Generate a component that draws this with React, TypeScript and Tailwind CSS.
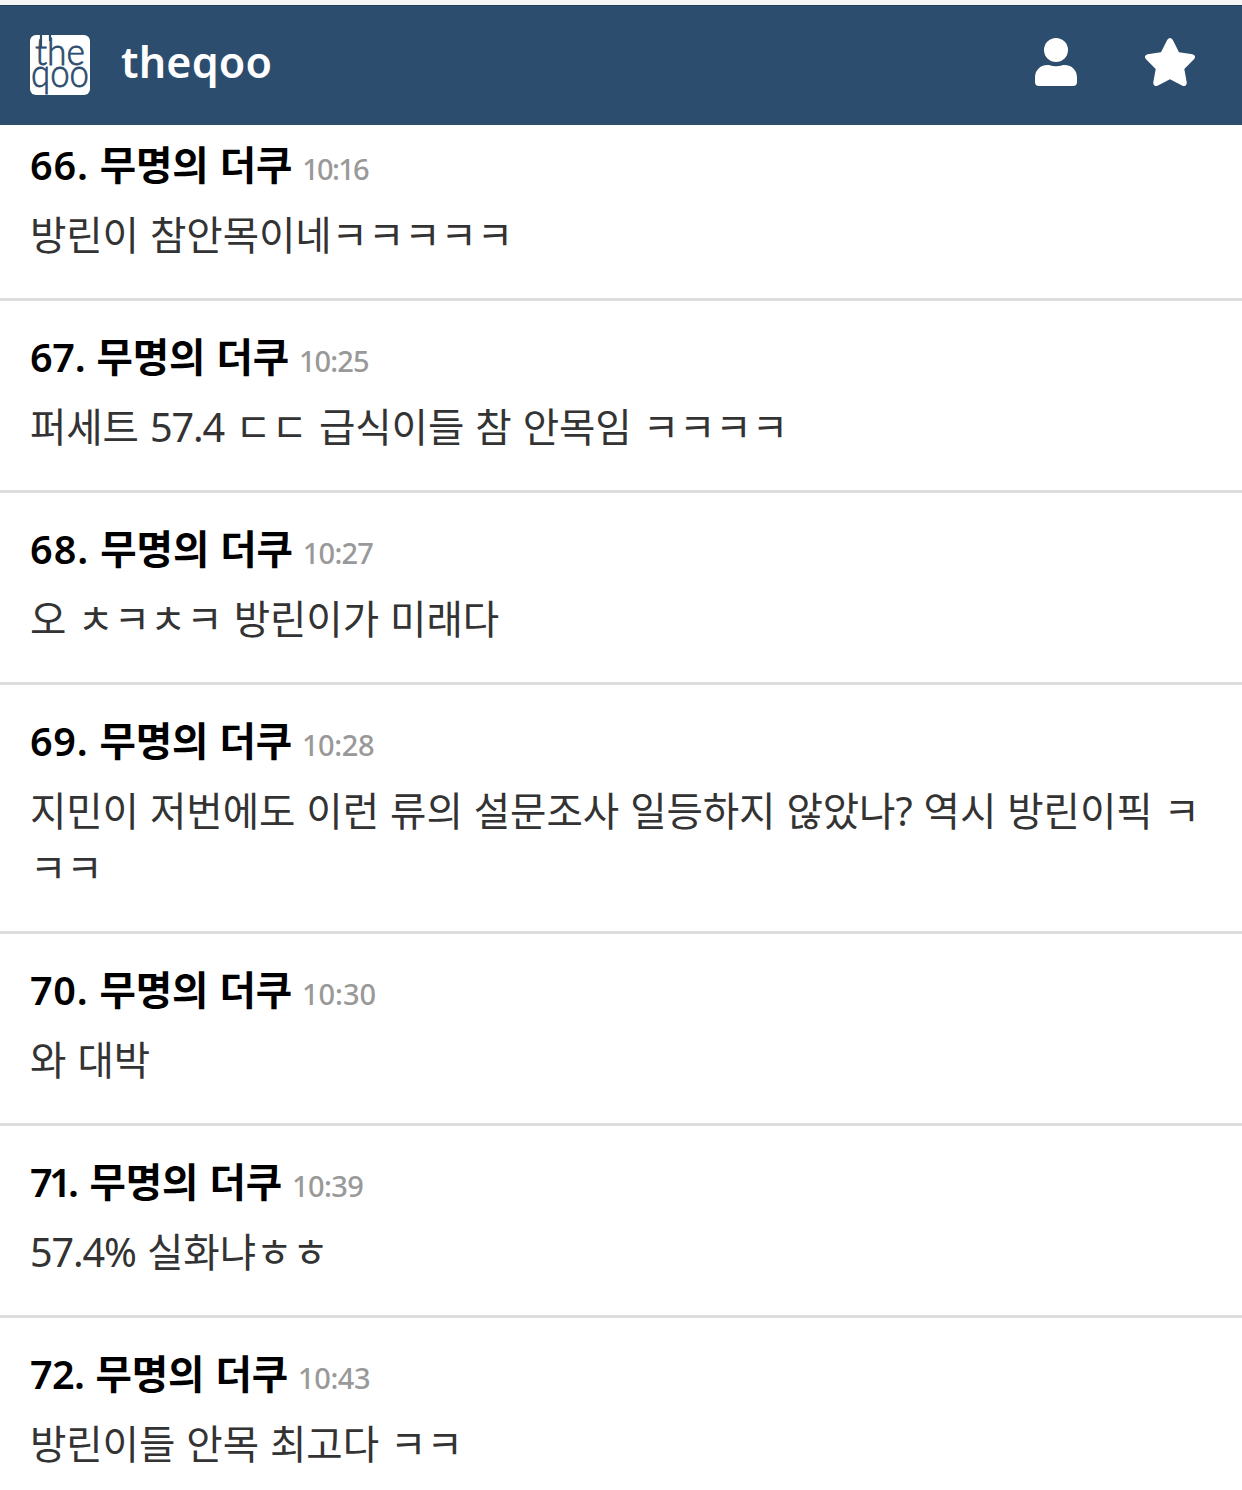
type Comment = {
  id: number;
  time: string;
  text: string;
  idSpacing: string;
  timeSpacing: string;
};

const comments: Comment[] = [
  { id: 66, time: '10:16', text: '방린이 참안목이네ㅋㅋㅋㅋㅋ', idSpacing: 'tracking-[0.8px]', timeSpacing: 'tracking-[-1.7px]' },
  { id: 67, time: '10:25', text: '퍼세트 57.4 ㄷㄷ 급식이들 참 안목임 ㅋㅋㅋㅋ', idSpacing: 'tracking-[-0.3px]', timeSpacing: 'tracking-[-0.9px]' },
  { id: 68, time: '10:27', text: '오 ㅊㅋㅊㅋ 방린이가 미래다', idSpacing: 'tracking-[1px]', timeSpacing: 'tracking-[-0.8px]' },
  { id: 69, time: '10:28', text: '지민이 저번에도 이런 류의 설문조사 일등하지 않았나? 역시 방린이픽 ㅋㅋㅋ', idSpacing: 'tracking-[0.7px]', timeSpacing: 'tracking-[-0.4px]' },
  { id: 70, time: '10:30', text: '와 대박', idSpacing: 'tracking-[0.7px]', timeSpacing: 'tracking-[0px]' },
  { id: 71, time: '10:39', text: '57.4% 실화냐ㅎㅎ', idSpacing: 'tracking-[-3.6px] mr-[3px]', timeSpacing: 'tracking-[-0.6px]' },
  { id: 72, time: '10:43', text: '방린이들 안목 최고다 ㅋㅋ', idSpacing: 'tracking-[-0.6px]', timeSpacing: 'tracking-[-0.4px]' },
];

function Logo() {
  return (
    <svg width="60" height="60" viewBox="0 0 60 60" className="shrink-0 overflow-visible">
      <rect width="60" height="60" rx="6" fill="#fff" />
      <g fill="#2c4d6e" stroke="#2c4d6e" strokeWidth="0.8" fontFamily="Lato, sans-serif" fontWeight="300">
        <text x="5" y="29.500" fontSize="38" textLength="50" lengthAdjust="spacingAndGlyphs">the</text>
        <text x="1" y="52" fontSize="40" textLength="58" lengthAdjust="spacingAndGlyphs">qoo</text>
      </g>
      <path d="M11 0V12M20 0V6" stroke="#2c4d6e" strokeWidth="2.200" />
    </svg>
  );
}

function UserIcon() {
  return (
    <svg width="42" height="48" viewBox="0 0 42 48" fill="#fff">
      <circle cx="21" cy="12" r="12" />
      <path d="M12.5 27C16 27 17 28.3 21 28.3S26 27 29.500 27C37 27 42 32.500 42 39.500V44Q42 48 38 48H4Q0 48 0 44V39.500C0 32.500 5 27 12.500 27Z" />
    </svg>
  );
}

function StarIcon() {
  return (
    <svg width="50" height="48" viewBox="0 0 50 48" fill="#fff">
      <path d="M22.300 1.700Q25-1.700 27.700 1.700L34 14.300L47.500 16.200Q51.500 17.600 49.200 21L39.300 31L41.800 44.800Q41.500 49 37.500 47.800L25 41.300L12.500 47.800Q8.500 49 8.200 44.800L10.700 31L.8 21Q-1.500 17.600 2.500 16.200L16 14.300Z" />
    </svg>
  );
}

function CommentRow({ comment }: { comment: Comment }) {
  // numbers are set a little tighter than the Korean text
  const parts = comment.text.split(/([\d.%]+)/);

  return (
    <li className="border-b-[3px] border-[#ddd] px-[30px] pt-7 pb-[34px] first:pt-3">
      <div className="mb-[13px] flex h-[57px] items-baseline leading-[57px] whitespace-nowrap">
        <strong className="text-[39.6px] font-bold tracking-[-0.15px] text-black [word-spacing:1px]">
          <span className={`font-semibold ${comment.idSpacing}`}>{comment.id}.</span> 무명의 더쿠
        </strong>
        <span className={`ml-2.5 text-[29px] font-medium text-[#999] ${comment.timeSpacing}`}>{comment.time}</span>
      </div>
      <p className="text-[39.6px] leading-[57px] tracking-[-0.1px] break-all text-[#333] [word-spacing:0.9px]">
        {parts.map((part, i) =>
          i % 2 === 1 ? (
            <span key={i} className="tracking-[-1.1px]">{part}</span>
          ) : (
            part
          )
        )}
      </p>
    </li>
  );
}

export default function App() {
  return (
    <div className="h-[1490px] overflow-hidden bg-white font-['Noto_Sans','Noto_Sans_CJK_KR',sans-serif]">
      <div className="h-[5px] bg-[#f5f5f5]" />
      <header className="flex h-[120px] items-center border-t border-[#263f59] bg-[#2c4d6e] pr-[47px] pb-0.5 pl-[30px]">
        <Logo />
        <h1 className="mb-1.5 ml-[31px] text-[43px] leading-none font-semibold tracking-[0.2px] text-white">theqoo</h1>
        <div className="mb-1.5 ml-auto flex items-center gap-[68px]">
          <button aria-label="profile">
            <UserIcon />
          </button>
          <button aria-label="favorites">
            <StarIcon />
          </button>
        </div>
      </header>
      <ul>
        {comments.map((comment) => (
          <CommentRow key={comment.id} comment={comment} />
        ))}
      </ul>
    </div>
  );
}
